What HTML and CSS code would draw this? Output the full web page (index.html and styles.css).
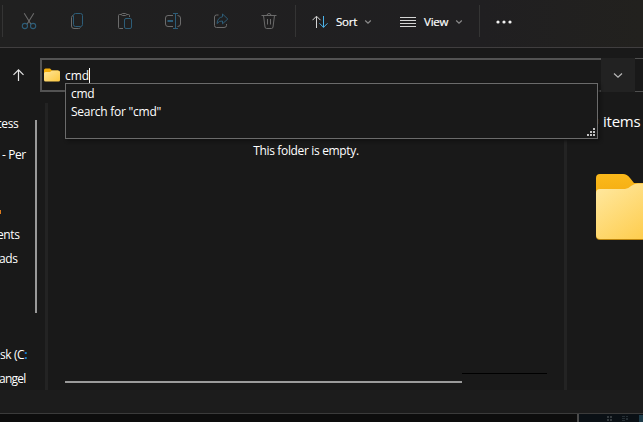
FILE: index.html
```
<!DOCTYPE html>
<html lang="en">
<head>
<meta charset="utf-8">
<title>File Explorer</title>
<link rel="stylesheet" href="styles.css">
</head>
<body>
<div class="window">
  <header class="toolbar">
    <i class="sep"></i>
    <div class="tool"><svg width="16" height="18" viewBox="0 0 16 18"><g fill="none" stroke-width="1.1"><path class="gray" d="M3.2 1.2 10 12.3M12.8 1.2 6 12.3"/><circle class="blue" cx="3.9" cy="14" r="2.6"/><circle class="blue" cx="12.1" cy="14" r="2.6"/></g></svg></div>
    <div class="tool"><svg width="16" height="18" viewBox="0 0 16 18"><g fill="none"><path class="gray" d="M4 3.5Q2.5 4 2.5 5.5V14Q2.5 16.5 5 16.5H9.5Q11 16.5 11.5 15.5"/><rect class="blue" x="4.5" y="1.5" width="9" height="13" rx="2"/></g></svg></div>
    <div class="tool"><svg width="16" height="18" viewBox="0 0 16 18"><g fill="none"><path class="gray" d="M4.5 2.5H2.5Q1.5 2.5 1.5 3.5V15.5Q1.5 16.5 2.5 16.5H6M10 2.5H11.5Q12.5 2.5 12.5 3.5V5"/><rect class="gray" x="4.5" y="1.5" width="5" height="2" rx="1"/><rect class="blue" x="7.5" y="6.5" width="7" height="10" rx="1.5"/></g></svg></div>
    <div class="tool"><svg width="18" height="18" viewBox="0 0 18 18"><g fill="none"><path class="gray" d="M9 3.5H4Q1.5 3.5 1.5 6V12Q1.5 14.5 4 14.5H9M13.500 3.500Q16.500 3.500 16.500 6V12Q16.500 14.500 13.500 14.500"/><path class="blue" d="M9 1.500H14M9 16.500H14M11.500 1.500V16.500"/><path class="blue" stroke-width="2" d="M3.500 9H9"/></g></svg></div>
    <div class="tool"><svg width="16" height="18" viewBox="0 0 16 18"><g fill="none"><path class="gray" d="M5.5 3H3.500Q1.500 3 1.500 5V13.500Q1.500 15.500 3.500 15.500H11Q13.500 15.500 13.500 13.500V12"/><path class="blue" stroke-linejoin="round" d="M9.500 2 14.800 7 9.500 11.800V9Q6.500 8.500 4 11.500Q4.500 5.500 9.500 4.800Z"/></g></svg></div>
    <div class="tool"><svg width="16" height="18" viewBox="0 0 16 18"><g class="gray" fill="none"><path d="M.5 3.500H15.500M2.500 3.500 4 15Q4.200 16.500 5.500 16.500H10.500Q11.800 16.500 12 15L13.500 3.500M6 3.500Q6 1.500 8 1.500T10 3.500M6.500 7V12.500M9.500 7V12.500"/></g></svg></div>
    <i class="sep mid"></i>
    <div class="menu sort"><svg width="16" height="14" viewBox="0 0 16 14"><g fill="none"><path stroke="#d4d4d4" d="M4.500 13V1.500M.5 5.200 4.500 1.200 8.500 5.200"/><path stroke="#4cb5ec" d="M11.500 1V12.500M7.500 8.300 11.500 12.300 15.500 8.300"/></g></svg><span class="word">Sort</span><svg class="chev" width="8" height="6" viewBox="0 0 8 6"><path d="M1.200 1.500 4 4.200 6.800 1.500"/></svg></div>
    <div class="menu view"><svg width="16" height="12" viewBox="0 0 16 12"><path stroke="#d4d4d4" d="M0 1.500H16M0 4.500H16M0 7.500H16M0 10.500H16"/></svg><span class="word">View</span><svg class="chev" width="8" height="6" viewBox="0 0 8 6"><path d="M1.200 1.500 4 4.200 6.800 1.500"/></svg></div>
    <i class="sep end"></i>
    <svg class="dots" width="16" height="4" viewBox="0 0 16 4"><g fill="#f2f2f2"><circle cx="2" cy="2" r="1.600"/><circle cx="8" cy="2" r="1.600"/><circle cx="14" cy="2" r="1.600"/></g></svg>
  </header>
  <nav class="navbar">
    <svg class="up" width="14" height="14" viewBox="0 0 14 14"><path fill="none" stroke="#e4e4e4" stroke-width="1.200" d="M7.500 13V2M2.500 6.800 7.500 1.800 12.500 6.800"/></svg>
    <div class="address">
      <svg width="16" height="14" viewBox="0 0 16 14"><defs><linearGradient id="leaf" x2="1" y2="1"><stop stop-color="#ffe69b"/><stop offset="1" stop-color="#fcc83f"/></linearGradient></defs><path fill="#f3ad0b" d="M0 2Q0 .5 1.500 .5H6L8 2.500H14V8H0Z"/><path fill="url(#leaf)" d="M0 5.500Q0 4 1.500 4H6L8 2.500H14.500Q16 2.500 16 4V12Q16 13.500 14.500 13.500H1.500Q0 13.500 0 12Z"/></svg>
      <span class="query">cmd</span><i class="caret"></i>
      <div class="suggest"><p>cmd</p><p>Search for "cmd"</p>
        <svg class="grip" width="9" height="9" viewBox="0 0 9 9"><path fill="#c4c4c4" d="M6 0h2v2h-2zM3 3h2v2h-2zM6 3h2v2h-2zM0 6h2v2h-2zM3 6h2v2h-2zM6 6h2v2h-2z"/></svg>
      </div>
    </div>
    <div class="history"><svg width="10" height="7" viewBox="0 0 10 7"><path fill="none" stroke="#b8b8b8" stroke-width="1.200" d="M1 1.500 5 5.200 9 1.500"/></svg></div>
    <div class="refresh"></div>
  </nav>
  <main class="content">
    <aside class="tree">
      <div class="labels">
        <p class="access">cess</p><p class="per">- Per</p><p class="orange"><i></i></p><p class="ents">ents</p><p class="ads">ads</p><p class="disk">sk (C<b>:</b></p><p class="angel">angel</p>
      </div>
      <i class="vbar"></i>
    </aside>
    <section class="files"><p class="empty">This folder is empty.</p><i class="black"></i><i class="hbar"></i></section>
    <aside class="preview"><p class="count"><i></i><span>items</span></p>
      <svg class="folder" width="80" height="68" viewBox="0 0 80 68"><defs><linearGradient id="front" x2="1" y2="1"><stop stop-color="#ffe9a2"/><stop offset=".85" stop-color="#fecb48"/></linearGradient><linearGradient id="back" x2="0" y2="1"><stop stop-color="#fbb91b"/><stop offset="1" stop-color="#efa30b"/></linearGradient></defs><path fill="url(#back)" d="M0 5Q0 1 4 1H27Q31 1 34 5L38 10H80V40H0Z"/><path fill="#bd850c" d="M0 20H80V67H4Q0 67 0 63Z"/><path fill="url(#front)" d="M0 20Q0 16 4 16H29Q32 16 35 13Q38 10.500 42 10.500H80V66H4Q0 66 0 62Z"/></svg>
    </aside>
  </main>
  <footer class="status"></footer>
  <div class="desktop"><div class="left"></div><div class="taskbar"><svg width="64" height="8" viewBox="0 0 64 8"><path fill="#343a3e" d="M28 2h2v2h-2zM31 2h2v2h-2zM28 5h2v2h-2zM31 5h2v2h-2z"/><path fill="#252e34" d="M43 2h3v1h-3zM43 4h3v1h-3zM43 6h3v1h-3zM47 2h2v1h-2zM47 4h2v2h-2z"/><path fill="#1d3b48" d="M60 1h4v7h-4z"/></svg></div></div>
</div>
</body>
</html>
```
FILE: styles.css
```
* { box-sizing: border-box; }
body { margin: 0; background: #191919; color: #fff; font: 12px/16px "Open Sans", "Noto Sans", sans-serif; overflow: hidden; }
p { margin: 0; white-space: nowrap; }
svg, i { display: block; flex: none; }
.window { width: 643px; height: 422px; display: flex; flex-direction: column; }
.toolbar { height: 48px; flex: none; display: flex; align-items: flex-start; padding-left: 2px; background: linear-gradient(90deg, #202020, #201f21 75%, #22211e); border-bottom: 1px solid #403e3f; }
.sep { width: 1px; height: 32px; margin: 5px 2px 0 0; background: #343434; }
.mid { margin-left: 2px; margin-right: 16px; }
.end { margin-left: 16px; margin-right: 16px; }
.tool { width: 48px; height: 42px; display: flex; align-items: center; justify-content: center; }
.gray { stroke: #6b6b6b; }
.blue { stroke: #2d5d78; }
.menu { height: 43px; display: flex; align-items: center; }
.word { margin-left: 8px; font-size: 11.5px; letter-spacing: -.2px; white-space: nowrap; -webkit-text-stroke: .2px #fff; }
.sort .word { width: 28px; }
.sort { width: 88px; }
.view { width: 63px; }
.view .word { width: 31px; }
.chev path { fill: none; stroke: #8b8b8b; stroke-width: 1.2; }
.dots { margin-top: 20px; }
.navbar { height: 55px; flex: none; display: flex; padding: 10px 0 0 11px; }
.up { margin: 10px 15px 0 0; }
.address { position: relative; width: 561px; height: 34px; display: flex; align-items: center; padding-left: 2px; border: 2px solid #535353; border-right: 0; box-shadow: inset 1px 0 #191919; }
.query { margin: 2px 0 0 5px; letter-spacing: -.1px; }
.caret { width: 1px; height: 15px; background: #fff; }
.suggest { position: absolute; z-index: 2; left: 23px; top: 23px; width: 533px; height: 56px; padding: 1px 5px; border: 1px solid #6b6b6b; background: #191919; line-height: 18px; box-shadow: 2px 2px 3px #111; }
.suggest p { letter-spacing: -.26px; }
.grip { position: absolute; right: 1px; bottom: 1px; }
.history { width: 34px; height: 34px; display: flex; align-items: center; justify-content: center; background: #222; }
.refresh { flex: 1; height: 34px; border: solid #505050; border-width: 1px 0; }
.content { height: 287px; flex: none; display: flex; }
.tree { width: 48px; display: flex; background: #191919; border-right: 3px solid #232323; }
.labels { width: 27px; overflow: hidden; padding-top: 13px; letter-spacing: -.4px; }
.access { margin-left: -4px; }
.per { margin: 15px 0 0 2px; }
.orange { height: 16px; margin-top: 47px; }
.orange i { width: 1px; height: 4px; background: #dc7a1c; }
.ents { margin: 1px 0 0 -3px; }
.ads { margin: 8px 0 0 -1px; }
.disk { margin-top: 80px; }
.disk b { color: #1685da; }
.angel { margin: 8px 0 0 -1px; letter-spacing: -.75px; }
.vbar { width: 2px; height: 193px; margin: 17px 0 0 8px; background: #999; }
.files { width: 516px; display: flex; flex-direction: column; }
.empty { margin-top: 40px; text-align: center; letter-spacing: -.34px; }
.black { width: 85px; height: 1px; margin: 214px 0 0 414px; background: #000; }
.hbar { width: 397px; height: 2px; margin: 7px 0 0 17px; background: #999; }
.preview { flex: 1; overflow: hidden; border-left: 3px solid #232323; }
.count { display: flex; align-items: center; height: 20px; margin-top: 8px; padding-left: 31px; font-size: 15px; }
.count i { width: 1px; height: 5px; background: #8b4b16; }
.count span { margin-left: 4px; letter-spacing: -.25px; }
.folder { margin: 42px 0 0 29px; }
.status { height: 24px; flex: none; background: #1c1c1c; border-bottom: 1px solid #3b3b3b; }
.desktop { flex: 1; display: flex; background: #0d0d0d; }
.left { width: 579px; border-right: 2px solid #4b4b4b; }
.taskbar { flex: 1; background: #0a1015; }
```
